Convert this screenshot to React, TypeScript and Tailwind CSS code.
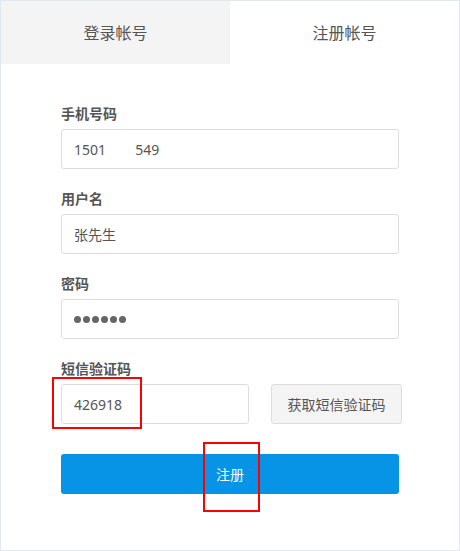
import { useState } from 'react'

const font = { fontFamily: '"Noto Sans", "Noto Sans CJK SC", sans-serif' }

function Field({ label, children }: { label: string; children: React.ReactNode }) {
  return (
    <div className="mb-5">
      <div className="h-5 leading-5 text-[14px] font-bold text-[#555] mb-[5px]">{label}</div>
      {children}
    </div>
  )
}

const inputCls =
  'w-full h-10 px-3 border border-[#dddddd] rounded-[3px] bg-white text-[14px] text-[#555] outline-none'

export default function App() {
  const [tab, setTab] = useState<'login' | 'register'>('register')
  const [phone, setPhone] = useState('1501        549')
  const [name, setName] = useState('张先生')
  const [code, setCode] = useState('426918')

  return (
    <div style={font} className="relative w-[460px] h-[551px] bg-white border border-[#e1e8ef]">
      {/* Tabs */}
      <div className="flex h-[63px]">
        <button
          onClick={() => setTab('login')}
          className={`w-[229px] text-[16px] text-[#555] ${tab === 'login' ? 'bg-white' : 'bg-[#f4f4f4]'}`}
        >
          登录帐号
        </button>
        <button
          onClick={() => setTab('register')}
          className={`flex-1 text-[16px] text-[#555] ${tab === 'register' ? 'bg-white' : 'bg-[#f4f4f4]'}`}
        >
          注册帐号
        </button>
      </div>

      {/* Form */}
      <div className="px-[60px] pt-10">
        <Field label="手机号码">
          <input className={inputCls} value={phone} onChange={e => setPhone(e.target.value)} />
        </Field>
        <Field label="用户名">
          <input className={inputCls} value={name} onChange={e => setName(e.target.value)} />
        </Field>
        <Field label="密码">
          <div className={`${inputCls} flex items-center gap-[2px]`}>
            {[0, 1, 2, 3, 4, 5].map(i => (
              <span key={i} className="w-[7px] h-[7px] rounded-full bg-[#666]" />
            ))}
          </div>
        </Field>
        <div>
          <div className="h-5 leading-5 text-[14px] font-bold text-[#555] mb-[5px]">短信验证码</div>
          <div className="flex gap-[22px]">
            <input
              className={`${inputCls} !w-[188px]`}
              value={code}
              onChange={e => setCode(e.target.value)}
            />
            <button className="w-[131px] h-10 shrink-0 border border-[#dddddd] rounded-[3px] bg-[#f4f4f4] text-[14px] text-[#555]">
              获取短信验证码
            </button>
          </div>
        </div>
        <button className="mt-[30px] w-full h-10 rounded-[3px] bg-[#0894e6] text-white text-[14px]">注册</button>
      </div>

      {/* Annotation boxes */}
      <div className="absolute left-[51px] top-[376px] w-[90px] h-[52px] border-2 border-[#ff0000] pointer-events-none" />
      <div className="absolute left-[202px] top-[441px] w-[57px] h-[70px] border-2 border-[#ff0000] pointer-events-none" />
    </div>
  )
}
